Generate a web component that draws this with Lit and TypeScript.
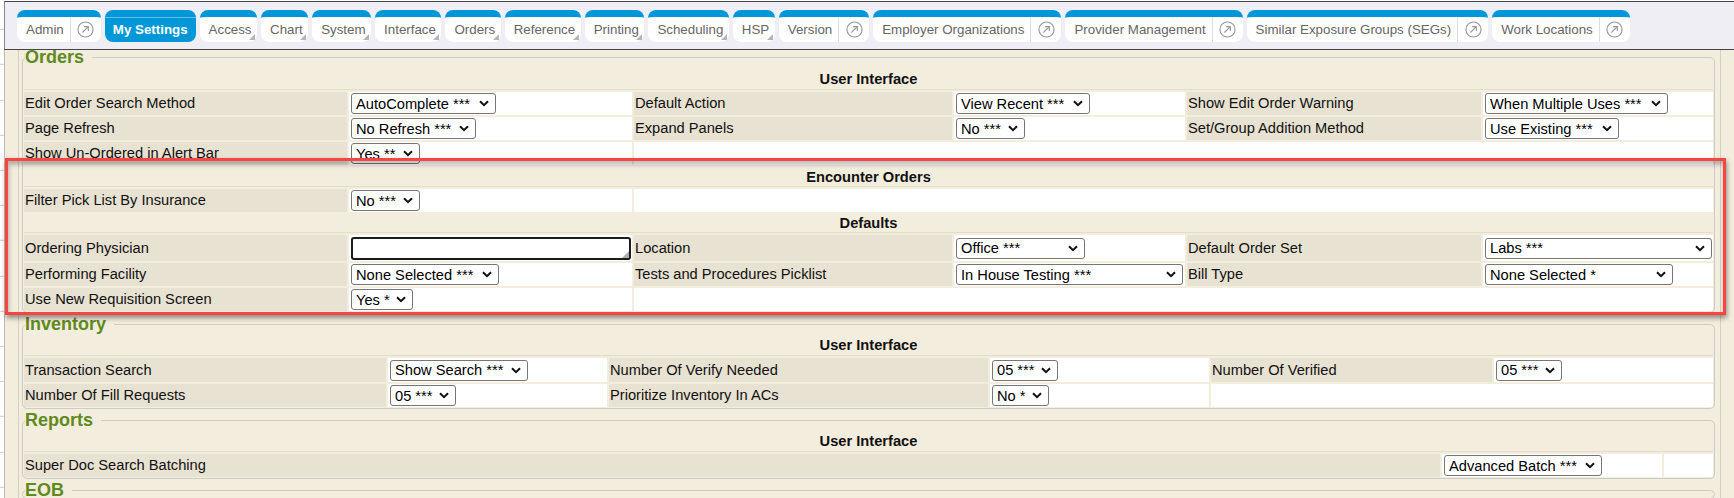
import { LitElement, html, css, nothing } from "lit";
import { customElement } from "lit/decorators.js";

const TABS: { t: string; kind: "link" | "menu" | "active" }[] = [
  { t: "Admin", kind: "link" },
  { t: "My Settings", kind: "active" },
  { t: "Access", kind: "menu" },
  { t: "Chart", kind: "menu" },
  { t: "System", kind: "menu" },
  { t: "Interface", kind: "menu" },
  { t: "Orders", kind: "menu" },
  { t: "Reference", kind: "menu" },
  { t: "Printing", kind: "menu" },
  { t: "Scheduling", kind: "menu" },
  { t: "HSP", kind: "menu" },
  { t: "Version", kind: "link" },
  { t: "Employer Organizations", kind: "link" },
  { t: "Provider Management", kind: "link" },
  { t: "Similar Exposure Groups (SEGs)", kind: "link" },
  { t: "Work Locations", kind: "link" },
];

@customElement("app-root")
export class AppRoot extends LitElement {
  static styles = css`
    :host {
      display: block;
      height: 498px;
      overflow: hidden;
      position: relative;
      background-color: #fff;
      background-image: repeating-linear-gradient(#fff 0, #fff 34.2px, #ccc 34.2px, #ccc 35.2px);
      background-position: 0 -5.2px;
      font-family: "Liberation Sans", Arial, sans-serif;
      font-size: 14.67px;
      color: #111;
    }
    .bar {
      margin: 1px 0 0 4px;
      height: 49px;
      box-sizing: border-box;
      background: #eeeef4;
      border-top: 1px solid #444;
      border-bottom: 1px solid #444;
      border-left: 1px solid #888;
      display: flex;
      gap: 4px;
      padding: 8px 0 0 12px;
      position: relative;
      z-index: 1;
    }
    .tab {
      height: 32px;
      box-sizing: border-box;
      background: #fff;
      border-top: 7px solid #0097d9;
      border-radius: 8px;
      display: flex;
      align-items: center;
      color: #666;
      font-size: 13.33px;
      white-space: nowrap;
      position: relative;
    }
    .tab .txt { padding: 0 6px 0 9px; }
    .tab.menu .txt { padding: 0 5.5px 0 9px; }
    .tab.active {
      background: #0097d9;
      color: #fff;
      font-weight: bold;
      border-top-color: #0097d9;
    }
    .tab.active .txt { padding: 0 8px; }
    .tab.active::before {
      content: "";
      position: absolute;
      left: 0;
      right: 0;
      top: 0;
      height: 1px;
      background: #5cbde6;
    }
    .tab.menu::after {
      content: "";
      position: absolute;
      right: 2px;
      bottom: 2px;
      width: 0;
      height: 0;
      border-left: 6px solid transparent;
      border-bottom: 6px solid #b5b5b5;
    }
    .go {
      width: 30px;
      align-self: stretch;
      border-left: 1px solid #ddd;
      display: flex;
      align-items: center;
      justify-content: center;
    }
    .go svg { width: 17px; height: 17px; display: block; margin-top: -1px; }
    .main {
      background: #f3eddd;
      height: 448px;
      margin-left: 4px;
      border-left: 1px solid #bbb;
      box-sizing: border-box;
      padding: 0 13px 0 13px;
      display: flow-root;
    }
    .wrap {
      border-left: 1px solid #d3cfc2;
      border-right: 1px solid #d3cfc2;
      padding: 0 5px 0 3px;
    }
    fieldset {
      margin: 0;
      padding: 0 1px 1px;
      border: 1px solid #cccbc6;
      border-radius: 5px;
      min-width: 0;
    }
    fieldset + fieldset { margin-top: 4px; }
    legend {
      padding: 0 8px 0 0;
      margin-left: 1px;
      font-size: 18px;
      line-height: 14px;
      font-weight: bold;
      color: #5f8a1e;
    }
    .head {
      font-weight: bold;
      text-align: center;
      box-sizing: border-box;
      height: 21px;
      line-height: 20px;
      border-bottom: 1px solid #e4dec8;
      margin-bottom: 2px;
    }
    .head.first { margin-top: 5px; }
    .head.near { margin-top: 4px; }
    .grid + .head { margin-top: 2px; height: 20px; }
    .grid + .head.short { height: 19px; line-height: 19px; }
    .grid {
      display: grid;
      gap: 2px;
      grid-auto-rows: 23px;
    }
    .orders { grid-template-columns: 323px 283px 318px 231px 294px 230px; }
    .defaults { grid-template-rows: 26px 23px 23px; }
    .inv {
      grid-template-columns: 362px 219px 379px 219px 281px 219px;
      grid-template-rows: 24px 23px;
    }
    .rep { grid-template-columns: 1416px 220px 49px; }
    .l {
      background: #e8e2d2;
      display: flex;
      align-items: center;
      box-sizing: border-box;
      padding: 0 0 1px 1px;
      overflow: hidden;
      white-space: nowrap;
    }
    .v {
      background: #fff;
      display: flex;
      align-items: center;
      padding-left: 2px;
      min-width: 0;
    }
    select {
      appearance: none;
      -webkit-appearance: none;
      font: 14.67px "Liberation Sans", Arial, sans-serif;
      height: 21px;
      box-sizing: border-box;
      color: #000;
      background-color: #fff;
      background-image: url("data:image/svg+xml,%3Csvg xmlns='http://www.w3.org/2000/svg' width='10' height='7' viewBox='0 0 10 7'%3E%3Cpath d='M1 1.2 L5 5.2 L9 1.2' fill='none' stroke='%23111' stroke-width='2'/%3E%3C/svg%3E");
      background-repeat: no-repeat;
      background-position: right 6px center;
      border: 1px solid #767676;
      border-radius: 3px;
      padding: 0 0 0 4px;
      margin: 0;
    }
    .ta {
      position: relative;
      display: block;
      height: 23px;
    }
    textarea {
      box-sizing: border-box;
      width: 100%;
      height: 100%;
      border: 2px solid #1c1c1c;
      border-radius: 3px;
      padding: 0;
      margin: 0;
      background: #fff;
      display: block;
      resize: none;
      outline: none;
    }
    .ta::after {
      content: "";
      position: absolute;
      right: 2px;
      bottom: 2px;
      width: 0;
      height: 0;
      border-left: 7px solid transparent;
      border-bottom: 7px solid #b0b0b0;
    }
    .mark {
      position: absolute;
      left: 5px;
      top: 158px;
      width: 1721px;
      height: 157px;
      box-sizing: border-box;
      border: 3px solid #fa4444;
      box-shadow: 1px 3px 5px rgba(0, 0, 0, 0.42), inset 1px 4px 4px rgba(0, 0, 0, 0.25);
      z-index: 2;
      pointer-events: none;
    }
  `;

  private pair(label: string, value: string, w: number, input = false) {
    return html`<div class="l">${label}</div>
      <div class="v">
        ${input
          ? html`<span class="ta" style="width:${w}px"><textarea></textarea></span>`
          : html`<select style="width:${w}px"><option>${value}</option></select>`}
      </div>`;
  }

  private blank(span: number) {
    return html`<div class="v" style="grid-column: span ${span}"></div>`;
  }

  private tab(t: { t: string; kind: string }) {
    return html`<div class="tab ${t.kind}">
      <span class="txt">${t.t}</span>
      ${t.kind === "link"
        ? html`<span class="go">
            <svg viewBox="0 0 18 18" fill="none" stroke="#999" stroke-width="1.2">
              <circle cx="9" cy="9" r="8" />
              <path d="M5.8 12.2 L12 6 M7.5 6 H12 V10.5" />
            </svg>
          </span>`
        : nothing}
    </div>`;
  }

  render() {
    return html`
      <div class="bar">${TABS.map((t) => this.tab(t))}</div>
      <div class="main">
        <div class="wrap">
          <fieldset>
            <legend>Orders</legend>
            <div class="head first">User Interface</div>
            <div class="grid orders">
              ${this.pair("Edit Order Search Method", "AutoComplete ***", 145)}
              ${this.pair("Default Action", "View Recent ***", 134)}
              ${this.pair("Show Edit Order Warning", "When Multiple Uses ***", 183)}
              ${this.pair("Page Refresh", "No Refresh ***", 125)}
              ${this.pair("Expand Panels", "No ***", 69)}
              ${this.pair("Set/Group Addition Method", "Use Existing ***", 134)}
              ${this.pair("Show Un-Ordered in Alert Bar", "Yes **", 69)}
              ${this.blank(4)}
            </div>
            <div class="head">Encounter Orders</div>
            <div class="grid orders">
              ${this.pair("Filter Pick List By Insurance", "No ***", 69)}
              ${this.blank(4)}
            </div>
            <div class="head short">Defaults</div>
            <div class="grid orders defaults">
              ${this.pair("Ordering Physician", "", 280, true)}
              ${this.pair("Location", "Office ***", 129)}
              ${this.pair("Default Order Set", "Labs ***", 227)}
              ${this.pair("Performing Facility", "None Selected ***", 148)}
              ${this.pair("Tests and Procedures Picklist", "In House Testing ***", 227)}
              ${this.pair("Bill Type", "None Selected *", 188)}
              ${this.pair("Use New Requisition Screen", "Yes *", 62)}
              ${this.blank(4)}
            </div>
          </fieldset>
          <fieldset>
            <legend>Inventory</legend>
            <div class="head near">User Interface</div>
            <div class="grid inv">
              ${this.pair("Transaction Search", "Show Search ***", 138)}
              ${this.pair("Number Of Verify Needed", "05 ***", 66)}
              ${this.pair("Number Of Verified", "05 ***", 66)}
              ${this.pair("Number Of Fill Requests", "05 ***", 66)}
              ${this.pair("Prioritize Inventory In ACs", "No *", 57)}
              ${this.blank(2)}
            </div>
          </fieldset>
          <fieldset>
            <legend>Reports</legend>
            <div class="head near">User Interface</div>
            <div class="grid rep">
              ${this.pair("Super Doc Search Batching", "Advanced Batch ***", 158)}
              <div class="v"></div>
            </div>
          </fieldset>
          <fieldset>
            <legend>EOB</legend>
          </fieldset>
        </div>
      </div>
      <div class="mark"></div>
    `;
  }
}
